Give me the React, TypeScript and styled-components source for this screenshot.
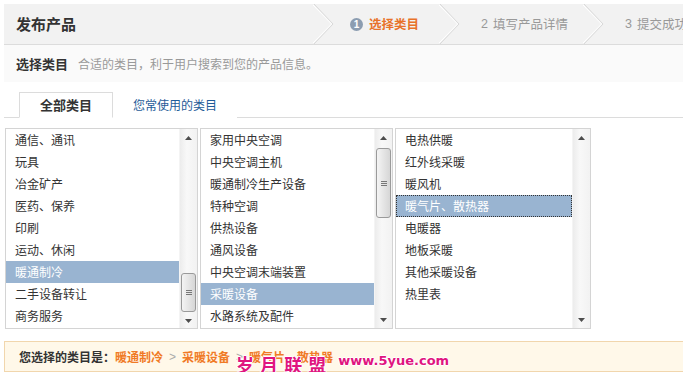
import React from "react";
import styled, { createGlobalStyle } from "styled-components";

const GlobalStyle = createGlobalStyle`
  html, body {
    margin: 0;
    padding: 0;
    background: #fff;
    overflow: hidden;
  }
  body {
    font-family: "Noto Sans CJK SC", "Liberation Sans", sans-serif;
    font-size: 12px;
    color: #333;
  }
`;

type Column = {
  items: string[];
  selected: number;
  focused?: boolean;
  thumb?: { top: number; height: number };
  width: number;
};

const columns: Column[] = [
  {
    items: ["通信、通讯", "玩具", "冶金矿产", "医药、保养", "印刷", "运动、休闲", "暖通制冷", "二手设备转让", "商务服务"],
    selected: 6,
    thumb: { top: 127, height: 39 },
    width: 193,
  },
  {
    items: ["家用中央空调", "中央空调主机", "暖通制冷生产设备", "特种空调", "供热设备", "通风设备", "中央空调末端装置", "采暖设备", "水路系统及配件"],
    selected: 7,
    thumb: { top: 2, height: 70 },
    width: 193,
  },
  {
    items: ["电热供暖", "红外线采暖", "暖风机", "暖气片、散热器", "电暖器", "地板采暖", "其他采暖设备", "热里表"],
    selected: 3,
    focused: true,
    width: 196,
  },
];

const steps = [
  { num: "1", label: "选择类目", active: true },
  { num: "2", label: "填写产品详情" },
  { num: "3", label: "提交成功" },
];

const Chevron = () => (
  <ChevronSvg width="22" height="40" viewBox="0 0 22 40">
    <polyline points="1,0 20,20 1,40" fill="none" stroke="#d9d9d9" strokeWidth="1" />
    <polyline points="0,1 18.6,20 0,39" fill="none" stroke="#ffffff" strokeWidth="1" />
  </ChevronSvg>
);

const ScrollArrow = ({ down }: { down?: boolean }) => (
  <ArrowBox>
    <svg width="7" height="4" viewBox="0 0 7 4">
      <polygon points={down ? "0,0 7,0 3.5,4" : "0,4 7,4 3.5,0"} fill="#4d4d4d" />
    </svg>
  </ArrowBox>
);

const Scrollbar = ({ thumb }: { thumb?: { top: number; height: number } }) => (
  <ScrollTrack>
    <ScrollArrow />
    <ThumbArea>
      {thumb && (
        <Thumb style={{ marginTop: thumb.top, height: thumb.height }}>
          <Grip />
          <Grip />
          <Grip />
        </Thumb>
      )}
    </ThumbArea>
    <ScrollArrow down />
  </ScrollTrack>
);

export default function App() {
  return (
    <Page>
      <GlobalStyle />
      <Header>
        <Title>发布产品</Title>
        {steps.map((s) => (
          <React.Fragment key={s.num}>
            <Chevron />
            <Step $active={s.active}>
              {s.active ? <StepCircle>{s.num}</StepCircle> : <StepNum>{s.num}</StepNum>}
              {s.label}
            </Step>
          </React.Fragment>
        ))}
      </Header>

      <SubHeader>
        <SubTitle>选择类目</SubTitle>
        <SubDesc>合适的类目，利于用户搜索到您的产品信息。</SubDesc>
      </SubHeader>

      <Tabs>
        <Tab $active>全部类目</Tab>
        <Tab>您常使用的类目</Tab>
      </Tabs>

      <Lists>
        {columns.map((col, i) => (
          <ListBox key={i} $width={col.width}>
            <Items>
              {col.items.map((item, j) => (
                <Item key={item} $selected={j === col.selected} $focused={j === col.selected && col.focused}>
                  {item}
                </Item>
              ))}
            </Items>
            <Scrollbar thumb={col.thumb} />
          </ListBox>
        ))}
      </Lists>

      <Footer>
        <FooterLabel>您选择的类目是：</FooterLabel>
        <Crumb>暖通制冷</Crumb>
        <Sep>&gt;</Sep>
        <Crumb>采暖设备</Crumb>
        <Sep>&gt;</Sep>
        <Crumb>暖气片、散热器</Crumb>
        <Watermark>
          <WmChars>岁 月 联 盟</WmChars>
          <WmUrl>www.5yue.com</WmUrl>
        </Watermark>
      </Footer>
    </Page>
  );
}

const Page = styled.div`
  width: 760px;
  padding: 4px 0 0 4px;
`;

const Header = styled.div`
  display: flex;
  align-items: center;
  height: 40px;
  background: #f2f2f2;
  border-bottom: 1px solid #dcdcdc;
`;

const Title = styled.h1`
  margin: 0;
  width: 297px;
  padding-left: 12px;
  font-size: 15px;
  line-height: 40px;
  font-weight: bold;
  color: #333;
`;

const ChevronSvg = styled.svg`
  display: block;
  flex: none;
`;

const Step = styled.div<{ $active?: boolean }>`
  display: flex;
  align-items: center;
  padding: 0 ${(p) => (p.$active ? "20px" : "15px")} 0 ${(p) => (p.$active ? "15px" : "20px")};
  font-size: 12.5px;
  line-height: 40px;
  white-space: nowrap;
  color: ${(p) => (p.$active ? "#e8722a" : "#999")};
  font-weight: ${(p) => (p.$active ? "bold" : "normal")};
`;

const StepCircle = styled.span`
  display: inline-flex;
  align-items: center;
  justify-content: center;
  width: 13px;
  height: 13px;
  margin-right: 6px;
  border-radius: 50%;
  background: #8c9db1;
  color: #fff;
  font-family: "Liberation Sans", sans-serif;
  font-size: 10px;
  line-height: 13px;
  font-weight: bold;
`;

const StepNum = styled.span`
  margin-right: 5px;
  font-family: "Liberation Sans", sans-serif;
`;

const SubHeader = styled.div`
  display: flex;
  align-items: center;
  height: 37px;
  padding-left: 12px;
  background: #fafafa;
`;

const SubTitle = styled.span`
  font-size: 13px;
  font-weight: bold;
  color: #333;
`;

const SubDesc = styled.span`
  margin-left: 10px;
  font-size: 12px;
  color: #999;
`;

const Tabs = styled.div`
  display: flex;
  align-items: flex-end;
  margin-top: 10px;
  padding-left: 15px;
  border-bottom: 1px solid #dcdcdc;
`;

const Tab = styled.div<{ $active?: boolean }>`
  box-sizing: border-box;
  height: 26px;
  margin-bottom: -1px;
  padding: 0 ${(p) => (p.$active ? "20px" : "19px")};
  border: 1px solid ${(p) => (p.$active ? "#dcdcdc" : "transparent")};
  border-bottom-color: ${(p) => (p.$active ? "#fff" : "transparent")};
  background: #fff;
  line-height: 24px;
  font-size: ${(p) => (p.$active ? "13px" : "12px")};
  font-weight: ${(p) => (p.$active ? "bold" : "normal")};
  color: ${(p) => (p.$active ? "#333" : "#1f5c99")};
  min-width: ${(p) => (p.$active ? "93px" : "auto")};
  text-align: center;
`;

const Lists = styled.div`
  display: flex;
  gap: 2px;
  margin-top: 10px;
  padding-left: 1px;
`;

const ListBox = styled.div<{ $width: number }>`
  box-sizing: border-box;
  display: flex;
  width: ${(p) => p.$width}px;
  height: 201px;
  border: 1px solid #d4d4d4;
  background: #fff;
`;

const Items = styled.ul`
  flex: 1;
  margin: 0;
  padding: 0;
  list-style: none;
  overflow: hidden;
`;

const Item = styled.li<{ $selected?: boolean; $focused?: boolean }>`
  box-sizing: border-box;
  height: 22px;
  padding-left: 9px;
  line-height: 22px;
  font-size: 12px;
  white-space: nowrap;
  color: ${(p) => (p.$selected ? "#fff" : "#333")};
  background: ${(p) => (p.$selected ? "#99b4d1" : "transparent")};
  outline: ${(p) => (p.$focused ? "1px dotted #333" : "none")};
  outline-offset: -1px;
`;

const ScrollTrack = styled.div`
  display: flex;
  flex-direction: column;
  width: 17px;
  flex: none;
  background: linear-gradient(to right, #ececec, #f8f8f8 40%, #f2f2f2);
  border-left: 1px solid #f4f4f4;
`;

const ArrowBox = styled.div`
  display: flex;
  align-items: center;
  justify-content: center;
  height: 17px;
  flex: none;
`;

const ThumbArea = styled.div`
  flex: 1;
`;

const Thumb = styled.div`
  box-sizing: border-box;
  display: flex;
  flex-direction: column;
  align-items: center;
  justify-content: center;
  gap: 1px;
  margin: 0 1px;
  border: 1px solid #9a9a9a;
  border-radius: 3px;
  background: linear-gradient(to right, #f4f4f4, #e2e2e2 60%, #d6d6d6);
`;

const Grip = styled.span`
  display: block;
  width: 6px;
  height: 1px;
  background: #777;
`;

const Footer = styled.div`
  position: relative;
  display: flex;
  align-items: center;
  box-sizing: border-box;
  height: 31px;
  margin-top: 12px;
  padding-left: 14px;
  background: #fff8e9;
  border: 1px solid #f1d6ad;
  border-right: none;
  font-size: 12px;
`;

const FooterLabel = styled.span`
  color: #333;
  font-weight: bold;
`;

const Crumb = styled.span`
  color: #f07a26;
  font-weight: bold;
`;

const Sep = styled.span`
  margin: 0 6px;
  color: #aaa;
  font-family: "Liberation Sans", sans-serif;
`;

const Watermark = styled.div`
  position: absolute;
  left: 231px;
  top: 10px;
  display: flex;
  align-items: flex-start;
  gap: 11px;
  pointer-events: none;
`;

const WmChars = styled.span`
  font-size: 18px;
  font-weight: bold;
  line-height: 24px;
  letter-spacing: 1px;
  color: #e0157f;
  white-space: pre;
  text-shadow: 1px 0 #fff, -1px 0 #fff, 0 1px #fff, 0 -1px #fff;
`;

const WmUrl = styled.span`
  font-family: "DejaVu Sans", sans-serif;
  font-size: 13px;
  font-weight: bold;
  line-height: 18px;
  color: #e0157f;
  text-shadow: 1px 0 #fff, -1px 0 #fff, 0 1px #fff, 0 -1px #fff;
`;
